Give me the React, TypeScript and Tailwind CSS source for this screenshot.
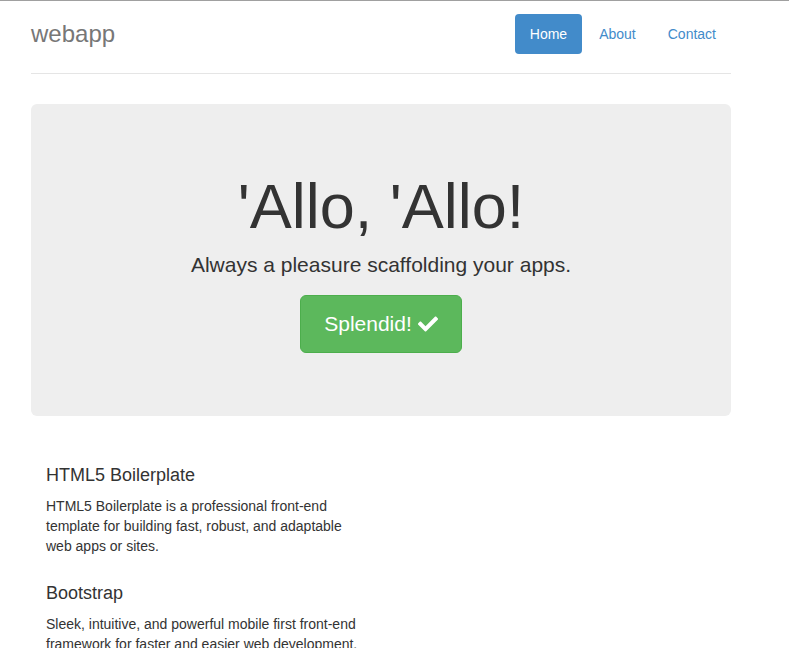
import React from "react";
import { FaCheck } from "react-icons/fa";

const features = [
  {
    title: "HTML5 Boilerplate",
    desc: "HTML5 Boilerplate is a professional front-end template for building fast, robust, and adaptable web apps or sites.",
  },
  {
    title: "Bootstrap",
    desc: "Sleek, intuitive, and powerful mobile first front-end framework for faster and easier web development.",
  },
  {
    title: "Modernizr",
    desc: "Modernizr is an open-source JavaScript library that helps you build the next generation of HTML5 and CSS3-powered websites.",
  },
];

const App = () => {
  return (
    <div className="min-h-screen border-t border-[#a0a0a0] bg-white pt-[13px] font-['Liberation_Sans',Arial,sans-serif] text-[14px] leading-[20px] text-[#333]">
      <div className="ml-[16px] w-[730px] px-[15px]">
        {/* header */}
        <div className="flex items-start justify-between border-b border-[#e5e5e5] pb-[19px]">
          <h3 className="text-[24px] leading-[40px] font-medium text-[#777]">webapp</h3>
          <ul className="flex gap-[2px]">
            <li>
              <a href="#" className="block rounded-[4px] bg-[#428bca] px-[15px] py-[10px] text-white">
                Home
              </a>
            </li>
            <li>
              <a href="#" className="block rounded-[4px] px-[15px] py-[10px] text-[#428bca]">
                About
              </a>
            </li>
            <li>
              <a href="#" className="block rounded-[4px] px-[15px] py-[10px] text-[#428bca]">
                Contact
              </a>
            </li>
          </ul>
        </div>

        {/* jumbotron */}
        <div className="mt-[30px] rounded-[6px] bg-[#eee] px-[60px] pt-[48px] pb-[49px] text-center">
          <h1 className="mt-[20px] mb-[9px] text-[63px] leading-[1.1] font-medium">'Allo, 'Allo!</h1>
          <p className="mb-[15px] text-[21px] leading-[30px]">Always a pleasure scaffolding your apps.</p>
          <div className="mb-[14px]">
            <a
              href="#"
              className="inline-flex items-center rounded-[6px] border border-[#4cae4c] bg-[#5cb85c] px-[23px] py-[14px] text-[21px] leading-[28px] text-white"
            >
              Splendid!
              <FaCheck className="ml-[6px] h-[20px] w-[20px]" />
            </a>
          </div>
        </div>

        {/* marketing */}
        <div className="mt-[50px] w-[350px] px-[15px]">
          {features.map((f, i) => (
            <div key={f.title}>
              <h4 className={`${i === 0 ? "mt-0" : "mt-[28px]"} mb-[10px] text-[18px] leading-[1.1] font-medium`}>
                {f.title}
              </h4>
              <p className="mb-[10px]">{f.desc}</p>
            </div>
          ))}
        </div>
      </div>
    </div>
  );
};

export default App;
